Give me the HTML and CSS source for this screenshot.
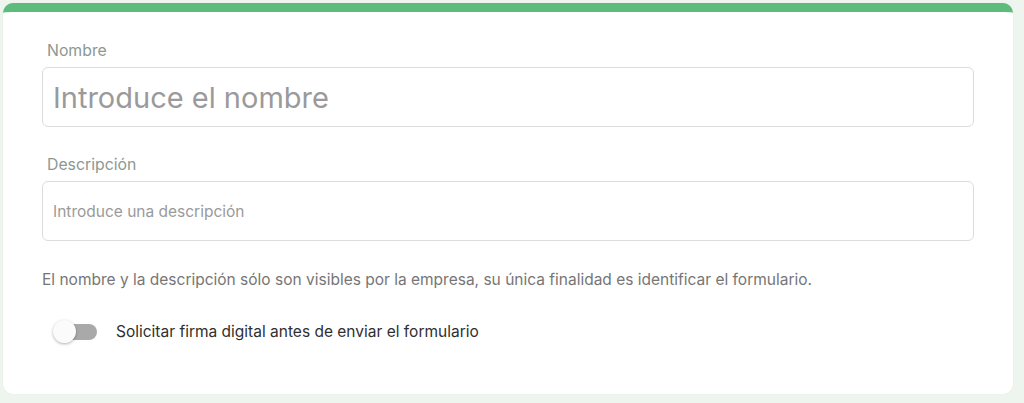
FILE: index.html
```html
<!DOCTYPE html>
<html lang="es">
<head>
<meta charset="utf-8">
<title>Formulario</title>
<link rel="stylesheet" href="styles.css">
</head>
<body>
<div class="card">
  <div class="field">
    <label class="label">Nombre</label>
    <div class="input input-lg">Introduce el nombre</div>
  </div>
  <div class="field">
    <label class="label">Descripción</label>
    <div class="input input-sm">Introduce una descripción</div>
  </div>
  <p class="help">El nombre y la descripción sólo son visibles por la empresa, su única finalidad es identificar el formulario.</p>
  <div class="toggle-row">
    <span class="toggle"><span class="knob"></span></span>
    <span class="toggle-label">Solicitar firma digital antes de enviar el formulario</span>
  </div>
</div>
</body>
</html>
```

FILE: styles.css
```css
html, body {
  margin: 0;
  padding: 0;
}
body {
  background: #eef4ee;
  font-family: "Inter", "Liberation Sans", Arial, sans-serif;
  padding: 3px 11px 9px 3px;
  height: 403px;
  box-sizing: border-box;
}
.card {
  background: #ffffff;
  border-top: 9px solid #5dbb7b;
  border-radius: 10px;
  box-shadow: 0 0 2px rgba(0, 0, 0, 0.06);
  padding: 30px 39px 36px 39px;
  box-sizing: border-box;
  height: 391px;
}
.field {
  display: flex;
  flex-direction: column;
}
.label {
  color: #8e9892;
  font-size: 15.8px;
  padding-left: 5px;
  height: 17px;
  line-height: 17px;
  margin-bottom: 8px;
}
.input {
  border: 1px solid #dcdcdc;
  border-radius: 6px;
  height: 60px;
  box-sizing: border-box;
  display: flex;
  align-items: center;
  padding-left: 10px;
  color: #9a9a9a;
}
.input-lg {
  font-size: 29px;
  margin-bottom: 29px;
}
.input-sm {
  font-size: 15.5px;
}
.help {
  margin: 30px 0 0 0;
  color: #767676;
  font-size: 15.5px;
  line-height: 18px;
}
.toggle-row {
  display: flex;
  align-items: center;
  margin-top: 33px;
  padding-left: 14px;
}
.toggle {
  position: relative;
  width: 41px;
  height: 16px;
  background: #a9a9a9;
  border-radius: 8px;
  margin-right: 19px;
}
.knob {
  position: absolute;
  left: -3px;
  top: -4px;
  width: 23px;
  height: 23px;
  border-radius: 50%;
  background: #fbfbfb;
  box-shadow: 0 1px 3px rgba(0, 0, 0, 0.3);
}
.toggle-label {
  color: #2f2f2f;
  font-size: 15.5px;
}
```
